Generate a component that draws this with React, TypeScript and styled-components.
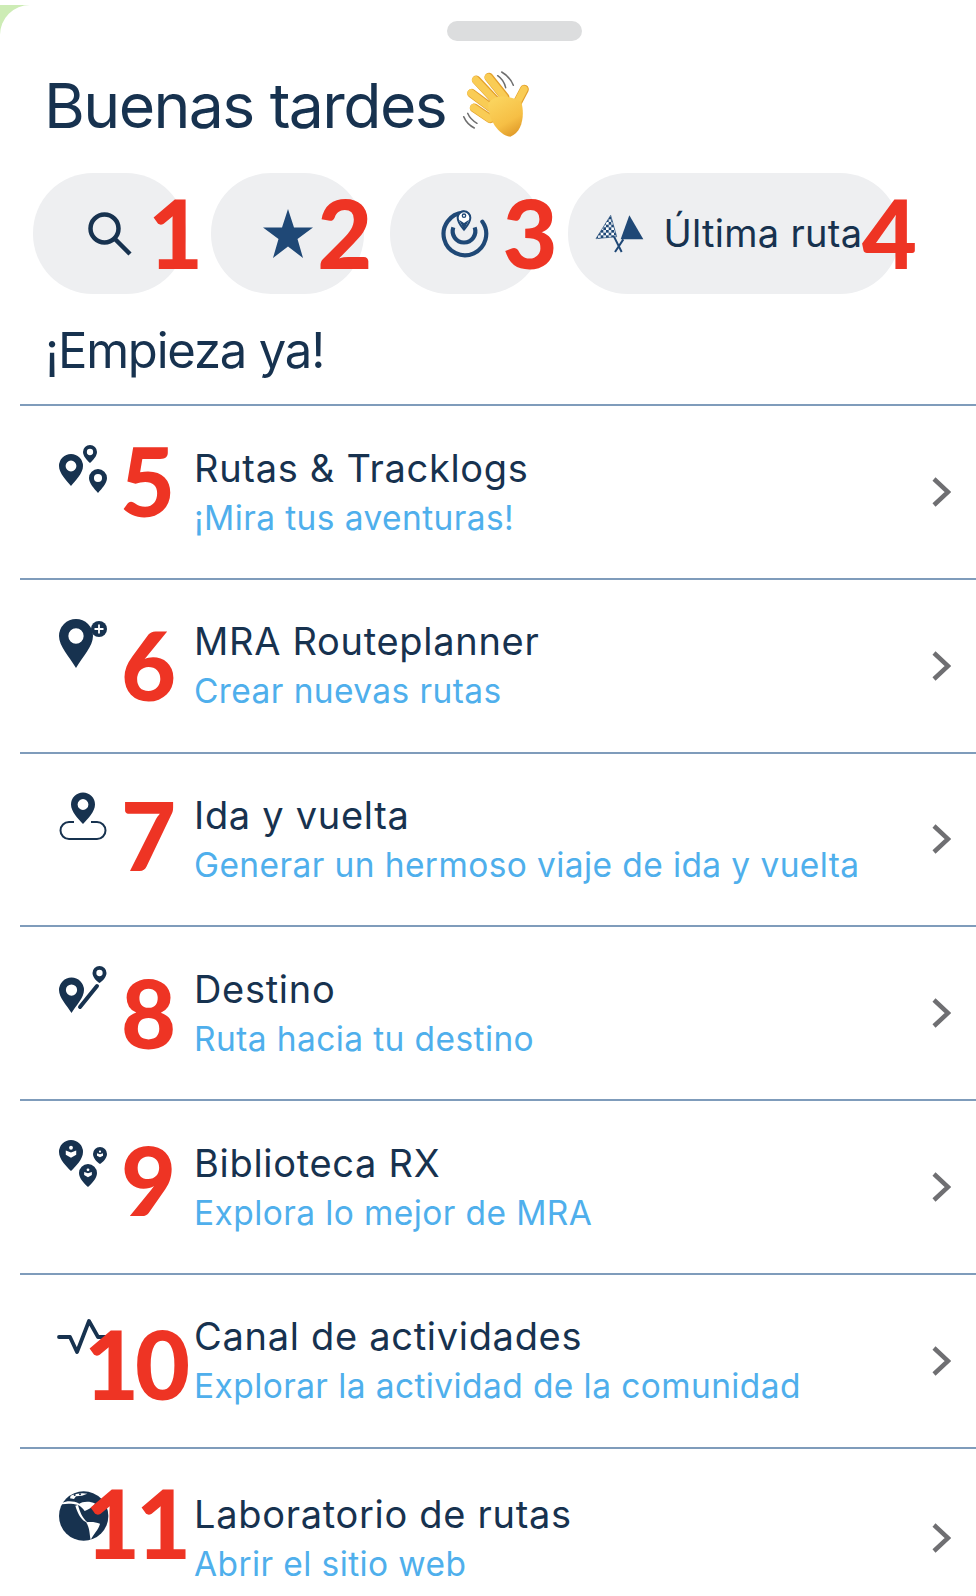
import React from "react";
import styled, { createGlobalStyle } from "styled-components";

const NAVY = "#17324f";
const BLUE = "#1f4876";

const GlobalStyle = createGlobalStyle`
  html, body {
    margin: 0;
    padding: 0;
    background: #fff;
  }
  * {
    box-sizing: border-box;
  }
`;

const Page = styled.div`
  width: 976px;
  height: 1596px;
  overflow: hidden;
  padding-top: 5px;
  background: #fff;
  font-family: Inter, "Liberation Sans", sans-serif;
`;

const Backdrop = styled.div`
  height: 100%;
  background: #cdecb5;
`;

const Sheet = styled.div`
  height: 100%;
  padding-top: 16px;
  background: #fff;
  border-top-left-radius: 30px;
`;

const Handle = styled.div`
  width: 135px;
  height: 20px;
  margin-left: 447px;
  border-radius: 10px;
  background: #dcddde;
`;

const Greeting = styled.h1`
  display: flex;
  align-items: flex-start;
  gap: 5px;
  height: 112px;
  margin: 0;
  padding: 24px 0 0 44px;
  font-size: 62.5px;
  line-height: 80px;
  font-weight: 400;
  letter-spacing: -1.6px;
  color: ${NAVY};
`;

const Hand = styled.svg`
  width: 90px;
  height: 85px;
  flex: none;
  margin-top: -5px;
`;

const PillRow = styled.div`
  display: flex;
  gap: 25.3px;
  padding-left: 33px;
  margin-top: 20px;
`;

const Pill = styled.div<{ $wide?: boolean }>`
  position: relative;
  display: flex;
  align-items: center;
  justify-content: ${(p) => (p.$wide ? "flex-start" : "center")};
  gap: 13.5px;
  width: ${(p) => (p.$wide ? 332 : 153)}px;
  height: 121px;
  padding-left: ${(p) => (p.$wide ? 22 : 0)}px;
  border-radius: 60px;
  background: #eeeff1;
`;

const PillLabel = styled.span`
  padding-bottom: 2px;
  font-size: 38px;
  letter-spacing: 0.3px;
  color: ${NAVY};
`;

const Marker = styled.span<{ $x: number; $y: number }>`
  position: absolute;
  left: ${(p) => p.$x}px;
  top: ${(p) => p.$y}px;
  font-family: Lato, "Open Sans", sans-serif;
  font-size: 95px;
  line-height: 100px;
  font-weight: 900;
  letter-spacing: -4px;
  color: #ee3424;
`;

const SectionTitle = styled.h2`
  margin: 0;
  height: 110px;
  padding: 27px 0 0 45px;
  font-size: 49px;
  line-height: 60px;
  font-weight: 400;
  letter-spacing: -1.2px;
  color: ${NAVY};
`;

const List = styled.div`
  margin-left: 20px;
`;

const Row = styled.div`
  position: relative;
  display: grid;
  grid-template-columns: 174px minmax(0, 1fr) auto;
  align-items: center;
  height: 173.75px;
  padding-right: 25px;
  border-top: 2px solid #7f9cbb;
`;

const IconCell = styled.div`
  align-self: start;
  height: 100%;
  padding: 39px 0 0 39px;
`;

const Icon = styled.svg`
  display: block;
  width: 50px;
  height: 50px;
  overflow: visible;
`;

const TextCell = styled.div<{ $shift?: number }>`
  align-self: start;
  padding-top: ${(p) => 36.5 + (p.$shift || 0)}px;
`;

const RowTitle = styled.div`
  font-size: 38px;
  line-height: 50px;
  letter-spacing: 0.7px;
  color: ${NAVY};
`;

const RowSubtitle = styled.div`
  font-size: 33.5px;
  line-height: 50px;
  letter-spacing: 0.4px;
  color: #4fafec;
`;

const Chevron = styled.svg<{ $shift?: number }>`
  display: block;
  width: 20px;
  height: 32px;
  margin-top: ${(p) => (p.$shift || 0) * 2}px;
`;

// teardrop pin, with the hole cut out when hole is set
const pin = (cx: number, cy: number, r: number, tip: number, hole = 0.45) => {
  const outline = `M${cx} ${tip}C${cx - 0.4 * r} ${cy + 1.2 * r} ${cx - r} ${cy + 0.6 * r} ${cx - r} ${cy}A${r} ${r} 0 1 1 ${cx + r} ${cy}C${cx + r} ${cy + 0.6 * r} ${cx + 0.4 * r} ${cy + 1.2 * r} ${cx} ${tip}Z`;
  if (!hole) return outline;
  const h = r * hole;
  return `${outline}M${cx - h} ${cy}A${h} ${h} 0 1 0 ${cx + h} ${cy}A${h} ${h} 0 1 0 ${cx - h} ${cy}Z`;
};

const Pins = ({ d }: { d: string }) => <path d={d} fill={NAVY} fillRule="evenodd" />;

const BookMark = ({ cx, cy, r }: { cx: number; cy: number; r: number }) => (
  <g fill="#fff">
    <circle cx={cx} cy={cy - r * 0.45} r={r * 0.2} />
    <path
      d={`M${cx - r * 0.55} ${cy - r * 0.15}L${cx} ${cy + r * 0.05}L${cx + r * 0.55} ${cy - r * 0.15}V${cy + r * 0.3}L${cx} ${cy + r * 0.6}L${cx - r * 0.55} ${cy + r * 0.3}Z`}
    />
  </g>
);

const RoutesIcon = () => (
  <Icon viewBox="0 0 50 50">
    <Pins d={pin(12, 21, 12, 41) + pin(31, 7, 7, 18) + pin(39, 33, 9, 48)} />
  </Icon>
);

const PlannerIcon = () => (
  <Icon viewBox="0 0 50 50">
    <Pins d={pin(17, 17, 17, 49)} />
    <circle cx="40" cy="10" r="8" fill={NAVY} />
    <path d="M35.5 10h9M40 5.5v9" stroke="#fff" strokeWidth="1.8" />
  </Icon>
);

const RoundTripIcon = () => (
  <Icon viewBox="0 0 50 50">
    <path
      d="M15 29H10A8.500 8.500 0 0 0 10 46H38A8.500 8.500 0 0 0 38 29H32"
      fill="none"
      stroke={NAVY}
      strokeWidth="2"
    />
    <Pins d={pin(24, 11.5, 12, 31)} />
  </Icon>
);

const DestinationIcon = () => (
  <Icon viewBox="0 0 50 50">
    <Pins d={pin(12.5, 24, 12.5, 47) + pin(40.5, 7, 7, 17)} />
    <path d="M21 41L38 20" stroke={NAVY} strokeWidth="4" strokeLinecap="round" />
  </Icon>
);

const LibraryIcon = () => (
  <Icon viewBox="0 0 50 50">
    <Pins d={pin(12, 12, 12, 31, 0) + pin(41, 14, 7, 24, 0) + pin(29, 33, 9, 47, 0)} />
    <BookMark cx={12} cy={12} r={9.5} />
    <BookMark cx={41} cy={14} r={5.5} />
    <BookMark cx={29} cy={33} r={7} />
  </Icon>
);

const ActivityIcon = () => (
  <Icon viewBox="0 0 50 50">
    <path
      d="M0 23H11L18 38L30 7L39 23H48"
      fill="none"
      stroke={NAVY}
      strokeWidth="3.800"
      strokeLinejoin="round"
      strokeLinecap="round"
    />
  </Icon>
);

const GlobeIcon = () => (
  <Icon viewBox="27 21 150 150">
    <circle cx="101" cy="105" r="74" fill={NAVY} />
    <g fill="#fff">
      <path d="M36 66C52 58 72 60 88 68C96 62 118 58 136 68C126 80 112 86 104 90C98 82 92 76 84 72C70 68 52 67 36 70Z" />
      <path d="M84 72C90 92 94 106 112 124L106 122C90 112 82 94 76 74Z" />
      <path d="M108 124C120 122 136 122 150 128C146 146 130 160 122 177C118 160 120 140 108 124Z" />
      <path d="M62 44C74 38 96 34 112 38L96 44L78 46L72 54L60 52Z" />
    </g>
    <g fill={NAVY}>
      <circle cx="74" cy="42" r="3" />
      <circle cx="90" cy="40" r="3" />
    </g>
  </Icon>
);

const ChevronIcon = ({ shift }: { shift?: number }) => (
  <Chevron viewBox="0 0 20 32" $shift={shift}>
    <path d="M3 3L17 16L3 29" fill="none" stroke="#6f6f72" strokeWidth="4.500" />
  </Chevron>
);

const rows = [
  { icon: <RoutesIcon />, title: "Rutas & Tracklogs", sub: "¡Mira tus aventuras!", mark: "5", x: 100, y: 24 },
  { icon: <PlannerIcon />, title: "MRA Routeplanner", sub: "Crear nuevas rutas", mark: "6", x: 101, y: 34 },
  { icon: <RoundTripIcon />, title: "Ida y vuelta", sub: "Generar un hermoso viaje de ida y vuelta", mark: "7", x: 101, y: 30 },
  { icon: <DestinationIcon />, title: "Destino", sub: "Ruta hacia tu destino", mark: "8", x: 101, y: 35 },
  { icon: <LibraryIcon />, title: "Biblioteca RX", sub: "Explora lo mejor de MRA", mark: "9", x: 101, y: 28 },
  { icon: <ActivityIcon />, title: "Canal de actividades", sub: "Explorar la actividad de la comunidad", mark: "10", x: 64, y: 38 },
  { icon: <GlobeIcon />, title: "Laboratorio de rutas", sub: "Abrir el sitio web", mark: "11", x: 65, y: 23, shift: 3.5 },
];

export default function App() {
  return (
    <Page>
      <GlobalStyle />
      <Backdrop>
        <Sheet>
          <Handle />
          <Greeting>
            Buenas tardes
            <Hand viewBox="0 0 270 255">
              <defs>
                <linearGradient id="palm" x1="0.2" y1="0" x2="0.7" y2="1">
                  <stop offset="0" stopColor="#fbd55f" />
                  <stop offset="0.65" stopColor="#f6bf45" />
                  <stop offset="1" stopColor="#e09a28" />
                </linearGradient>
              </defs>
              <g fill="none" stroke="#6e6e6e" strokeWidth="4.500" strokeLinecap="round">
                <path d="M140 47C152 55 160 66 164 83M152 36C168 45 180 58 187 76" />
                <path d="M38 170C44 184 54 196 70 204M50 160C55 172 64 182 78 190" />
              </g>
              <g fill="none" strokeLinecap="round">
                <path d="M114 52L162 112M76 60L136 124M62 100L124 146M70 144L118 176M220 88L196 134" stroke="#e3a02c" strokeWidth="27" />
                <path d="M112 52L160 112M74 60L134 124M60 99L122 146M68 143L116 176M219 88L195 134" stroke="#f9cc55" strokeWidth="22" />
              </g>
              <path d="M112 130C134 100 176 108 210 124C222 160 216 216 178 230C142 226 110 176 112 130Z" fill="url(#palm)" />
            </Hand>
          </Greeting>
          <PillRow>
            <Pill>
              <svg width="44" height="44" viewBox="0 0 44 44" fill="none" stroke={NAVY} strokeWidth="4.500">
                <circle cx="16.500" cy="16.500" r="14" />
                <path d="M26.500 26.500L42 42" />
              </svg>
              <Marker $x={115} $y={9}>1</Marker>
            </Pill>
            <Pill>
              <svg width="50" height="50" viewBox="0 0 50 50" fill={BLUE}>
                <path d="M25 0L31 18.500H50L34.500 30L40 49L25 37.500L10 49L15.500 30L0 18.500H19Z" />
              </svg>
              <Marker $x={106} $y={9}>2</Marker>
            </Pill>
            <Pill>
              <svg width="70" height="65" viewBox="6 6 210 195" fill="none" stroke={BLUE}>
                <path d="M160 68A64 64 0 1 1 103 41" strokeWidth="12.500" strokeLinecap="round" />
                <path d="M137 85A34 34 0 1 1 73 85" strokeWidth="12.500" />
                <path d="M105 92C95 80 86 70 86 56A19 19 0 0 1 124 56C124 70 115 80 105 92Z" fill="#fff" strokeWidth="6" />
                <circle cx="105" cy="50" r="5" strokeWidth="4" />
                <path d="M90 62L105 72L120 62L105 92Z" fill={BLUE} stroke="none" />
              </svg>
              <Marker $x={113} $y={9}>3</Marker>
            </Pill>
            <Pill $wide>
              <svg width="60" height="55" viewBox="0 0 180 165">
                <defs>
                  <pattern id="checks" width="16" height="16" patternUnits="userSpaceOnUse">
                    <rect width="16" height="16" fill={BLUE} />
                    <rect width="8" height="8" fill="#fff" />
                    <rect x="8" y="8" width="8" height="8" fill="#e3e9f0" />
                  </pattern>
                </defs>
                <path d="M62 28L80 92L18 98Z" fill="url(#checks)" stroke={BLUE} strokeWidth="2" />
                <path d="M118 28L160 100H92Z" fill={BLUE} />
                <path d="M72 92L95 138M100 100L75 138" fill="none" stroke={BLUE} strokeWidth="6" />
              </svg>
              <PillLabel>Última ruta</PillLabel>
              <Marker $x={294} $y={9}>4</Marker>
            </Pill>
          </PillRow>
          <SectionTitle>¡Empieza ya!</SectionTitle>
          <List>
            {rows.map((r) => (
              <Row key={r.title}>
                <IconCell>{r.icon}</IconCell>
                <TextCell $shift={r.shift}>
                  <RowTitle>{r.title}</RowTitle>
                  <RowSubtitle>{r.sub}</RowSubtitle>
                </TextCell>
                <ChevronIcon shift={r.shift} />
                <Marker $x={r.x} $y={r.y}>{r.mark}</Marker>
              </Row>
            ))}
          </List>
        </Sheet>
      </Backdrop>
    </Page>
  );
}
